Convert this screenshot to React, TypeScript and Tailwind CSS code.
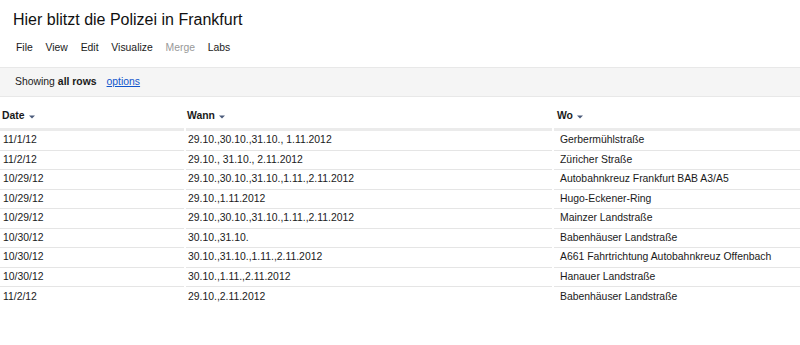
import React from "react";

const rows: [string, string, string][] = [
  ["11/1/12", "29.10.,30.10.,31.10., 1.11.2012", "Gerbermühlstraße"],
  ["11/2/12", "29.10., 31.10., 2.11.2012", "Züricher Straße"],
  ["10/29/12", "29.10.,30.10.,31.10.,1.11.,2.11.2012", "Autobahnkreuz Frankfurt BAB A3/A5"],
  ["10/29/12", "29.10.,1.11.2012", "Hugo-Eckener-Ring"],
  ["10/29/12", "29.10.,30.10.,31.10.,1.11.,2.11.2012", "Mainzer Landstraße"],
  ["10/30/12", "30.10.,31.10.", "Babenhäuser Landstraße"],
  ["10/30/12", "30.10.,31.10.,1.11.,2.11.2012", "A661 Fahrtrichtung Autobahnkreuz Offenbach"],
  ["10/30/12", "30.10.,1.11.,2.11.2012", "Hanauer Landstraße"],
  ["11/2/12", "29.10.,2.11.2012", "Babenhäuser Landstraße"],
];

function Arrow() {
  return (
    <svg width="6" height="4" viewBox="0 0 6 4" className="ml-[4px] mt-[1px]">
      <polygon points="0,0.5 6,0.5 3,3.5" fill="#4a5a7a" />
    </svg>
  );
}

export default function App() {
  const font = { fontFamily: '"Liberation Sans", Arial, sans-serif' };
  return (
    <div className="w-[800px] h-[345px] bg-white text-[#1a1a1a] overflow-hidden" style={font}>
      <div className="h-[41px] pl-[13px] pt-[10px] text-[16px] leading-[20px] text-[#111]">
        Hier blitzt die Polizei in Frankfurt
      </div>
      <div className="flex h-[14px] items-center pl-[9.6px] text-[10.4px] leading-[14px]">
        {["File", "View", "Edit", "Visualize", "Merge", "Labs"].map((m) => (
          <span key={m} className={`px-[6.4px] ${m === "Merge" ? "text-[#999]" : "text-[#1a1a1a]"}`}>
            {m}
          </span>
        ))}
      </div>
      <div className="mt-[12px] h-[30px] bg-[#f5f5f5] border-t border-b border-[#e8e8e8] flex items-center pl-[15px] text-[10.4px]">
        <span>Showing</span>
        <span className="font-bold ml-[3px]">all rows</span>
        <span className="ml-[10px] text-[#1155cc] underline">options</span>
      </div>
      <div className="grid grid-cols-[184px_366px_1fr] gap-x-[2px] text-[10.4px]">
        <div className="h-[34px] border-b-[3px] border-[#ebebeb] flex items-center pl-[2px] pt-[7px] font-bold">
          Date <Arrow />
        </div>
        <div className="h-[34px] border-b-[3px] border-[#ebebeb] flex items-center pl-[1px] pt-[7px] font-bold">
          Wann <Arrow />
        </div>
        <div className="h-[34px] border-b-[3px] border-[#ebebeb] flex items-center pl-[3px] pt-[7px] font-bold">
          Wo <Arrow />
        </div>
        {rows.map((r, i) => {
          const last = i === rows.length - 1;
          const b = last ? "" : "border-b border-[#e5e5e5]";
          return (
            <React.Fragment key={i}>
              <div className={`h-[19.5px] flex items-center pl-[3px] ${b}`}>{r[0]}</div>
              <div className={`h-[19.5px] flex items-center pl-[2px] ${b}`}>{r[1]}</div>
              <div className={`h-[19.5px] flex items-center pl-[6px] ${b}`}>{r[2]}</div>
            </React.Fragment>
          );
        })}
      </div>
    </div>
  );
}
